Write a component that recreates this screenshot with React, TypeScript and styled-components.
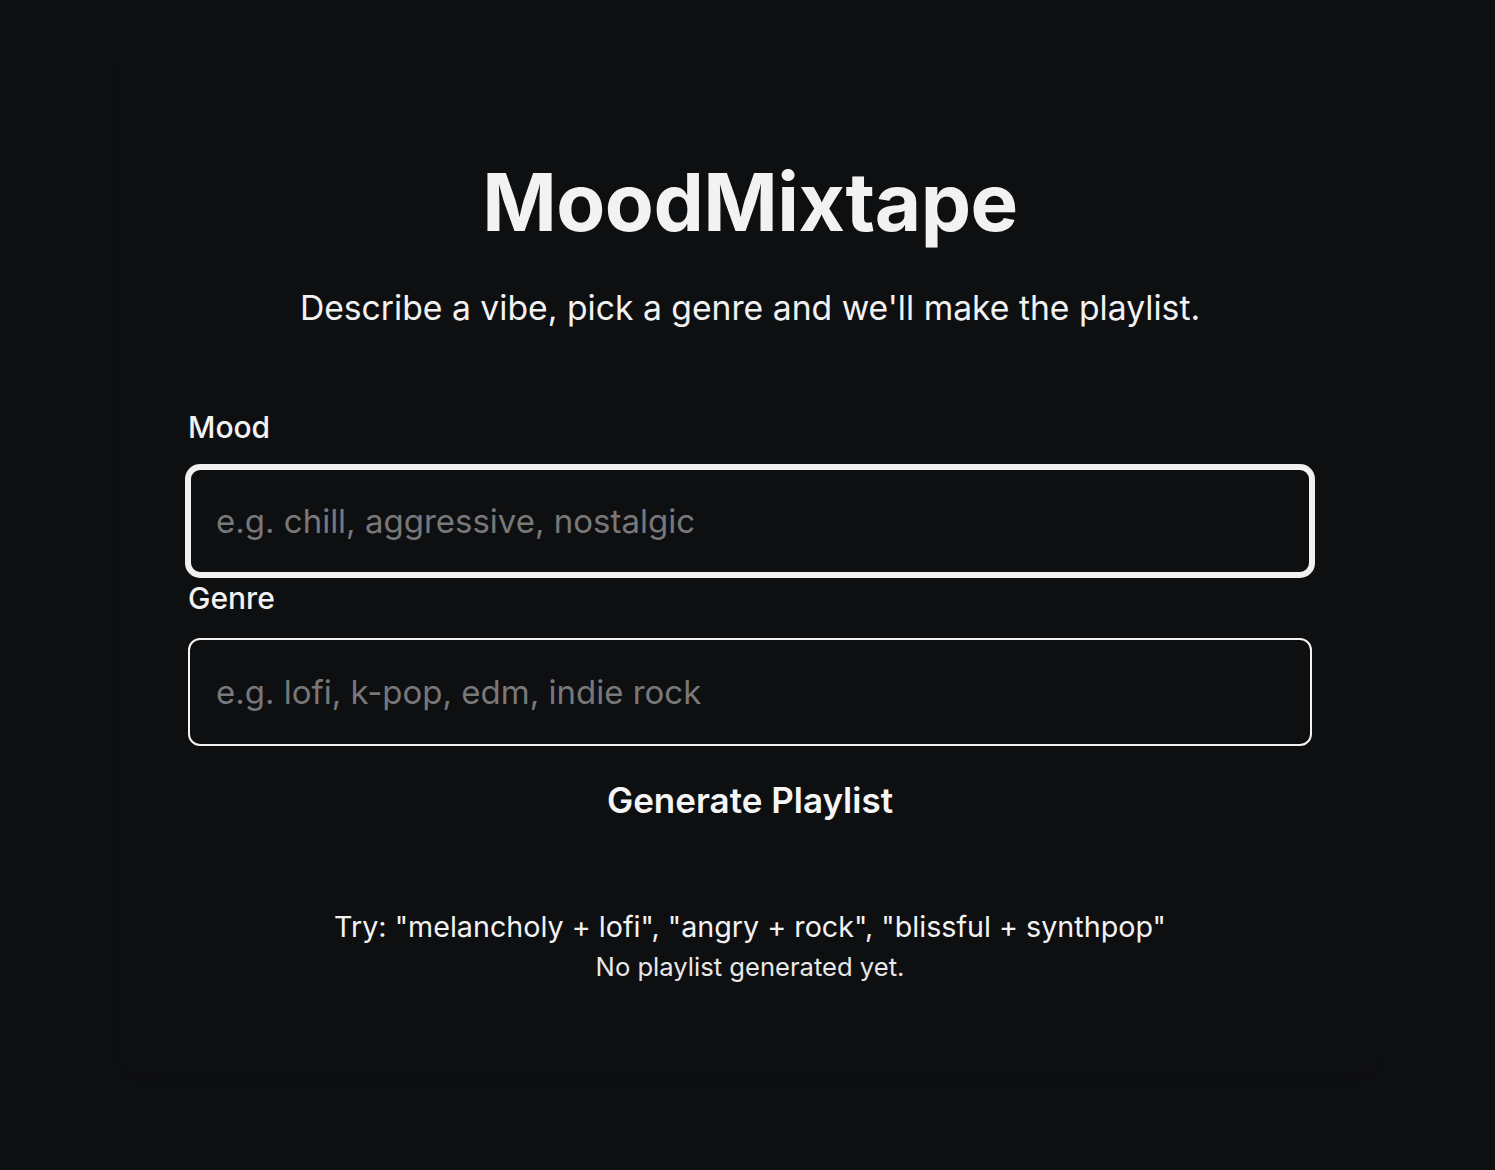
import React from "react";
import styled, { createGlobalStyle, css } from "styled-components";

const Global = createGlobalStyle`
  html, body {
    margin: 0;
    padding: 0;
    background: #0e0f11;
    color: #f2f2f2;
    font-family: Inter, "Noto Sans", sans-serif;
  }
  * { box-sizing: border-box; }
`;

const Page = styled.div`
  min-height: 1170px;
  display: flex;
  justify-content: center;
  padding-left: 5px;
  background: #0e0f11;
`;

const Card = styled.main`
  width: 1266px;
  margin-top: 40px;
  margin-bottom: 92px;
  padding: 121px 70px 95px;
  border-radius: 28px;
  border: 1px solid transparent;
  box-shadow: 0 3px 4px rgba(0, 0, 0, 0.1);
  display: flex;
  flex-direction: column;
  align-items: center;
`;

const Title = styled.h1`
  margin: 0;
  font-size: 80px;
  line-height: 80px;
  font-weight: 700;
  letter-spacing: -0.5px;
  color: #f2f2f2;
`;

const Subtitle = styled.p`
  margin: 42px 0 0;
  font-size: 33.7px;
  line-height: 48px;
  font-weight: 400;
  color: #f2f2f2;
`;

const Form = styled.form`
  align-self: stretch;
  margin-top: 77px;
  display: flex;
  flex-direction: column;
`;

const Label = styled.label`
  display: block;
  font-size: 30px;
  line-height: 36px;
  font-weight: 500;
  color: #f2f2f2;
`;

const Field = styled.div`
  display: flex;
  flex-direction: column;
  gap: 22px;
  & + & {
    margin-top: 5px;
  }
`;

const Input = styled.input<{ $active?: boolean }>`
  width: 100%;
  height: 108px;
  padding: 0 26px;
  border: 2px solid #f2f2f2;
  border-radius: 12px;
  background: #0e0f11;
  color: #f2f2f2;
  font-family: Inter, "Noto Sans", sans-serif;
  font-size: 33px;
  outline: none;
  caret-color: #f2f2f2;
  &::placeholder {
    color: #78787a;
  }
  ${(p) =>
    p.$active &&
    css`
      border-width: 3px;
      padding-left: 25px;
      box-shadow: 0 0 0 3px #f0f0f0;
    `}
`;

const Button = styled.button`
  margin-top: 5px;
  height: 98px;
  width: 100%;
  border: none;
  border-bottom: 1px solid rgba(255, 255, 255, 0.02);
  border-radius: 14px;
  background: transparent;
  color: #f5f5f5;
  font-family: Inter, "Noto Sans", sans-serif;
  font-size: 35px;
  font-weight: 600;
  cursor: pointer;
`;

const Hint = styled.p`
  margin: 60px 0 0;
  font-size: 28.7px;
  line-height: 36px;
  color: #f2f2f2;
`;

const Empty = styled.p`
  margin: 7px 0 0;
  font-size: 25.6px;
  line-height: 30px;
  color: #e8e8e8;
`;

export default function App() {
  return (
    <>
      <Global />
      <Page>
        <Card>
          <Title>MoodMixtape</Title>
          <Subtitle>Describe a vibe, pick a genre and we'll make the playlist.</Subtitle>
          <Form onSubmit={(e) => e.preventDefault()}>
            <Field>
              <Label htmlFor="mood">Mood</Label>
              <Input id="mood" $active autoFocus placeholder="e.g. chill, aggressive, nostalgic" />
            </Field>
            <Field>
              <Label htmlFor="genre">Genre</Label>
              <Input id="genre" placeholder="e.g. lofi, k-pop, edm, indie rock" />
            </Field>
            <Button type="submit">Generate Playlist</Button>
          </Form>
          <Hint>Try: "melancholy + lofi", "angry + rock", "blissful + synthpop"</Hint>
          <Empty>No playlist generated yet.</Empty>
        </Card>
      </Page>
    </>
  );
}
